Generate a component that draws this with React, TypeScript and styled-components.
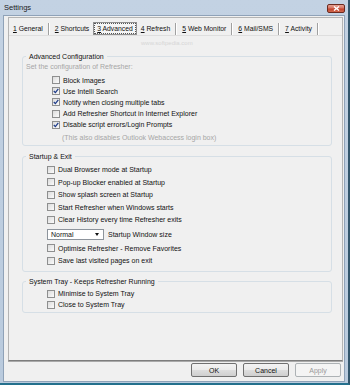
import React from 'react';
import styled, { createGlobalStyle } from 'styled-components';

const GlobalStyle = createGlobalStyle`
	html, body {
		margin: 0;
		padding: 0;
		background: #f0f0f0;
	}
	* {
		box-sizing: border-box;
	}
`;

interface Option {
	label: string;
	checked?: boolean;
}

const tabs = ['General', 'Shortcuts', 'Advanced', 'Refresh', 'Web Monitor', 'Mail/SMS', 'Activity'];
const activeTab = 2;

const advancedOptions: Option[] = [
	{ label: 'Block Images' },
	{ label: 'Use Intelli Search', checked: true },
	{ label: 'Notify when closing multiple tabs', checked: true },
	{ label: 'Add Refresher Shortcut in Internet Explorer' },
	{ label: 'Disable script errors/Login Prompts', checked: true },
];

const startupOptions: Option[] = [
	{ label: 'Dual Browser mode at Startup' },
	{ label: 'Pop-up Blocker enabled at Startup' },
	{ label: 'Show splash screen at Startup' },
	{ label: 'Start Refresher when Windows starts' },
	{ label: 'Clear History every time Refresher exits' },
];

const exitOptions: Option[] = [
	{ label: 'Optimise Refresher - Remove Favorites' },
	{ label: 'Save last visited pages on exit' },
];

const trayOptions: Option[] = [
	{ label: 'Minimise to System Tray' },
	{ label: 'Close to System Tray' },
];

const CheckBox: React.FC<{ checked?: boolean }> = ({ checked }) => (
	<Box>
		{checked && (
			<svg width="6" height="6" viewBox="0 0 6 6">
				<path d="M0.8 3 L2.4 4.6 L5.3 0.9" fill="none" stroke="#1f3d8a" strokeWidth="1.3" />
			</svg>
		)}
	</Box>
);

const OptionList: React.FC<{ items: Option[]; indent: number; rowHeight: number }> = ({ items, indent, rowHeight }) => (
	<>
		{items.map((item) => (
			<Row key={item.label} $indent={indent} $height={rowHeight}>
				<CheckBox checked={item.checked} />
				<span>{item.label}</span>
			</Row>
		))}
	</>
);

const App: React.FC = () => (
	<>
		<GlobalStyle />
		<Window>
			<TitleBar>
				<Title>Settings</Title>
				<CloseButton>
					<svg width="7" height="5" viewBox="0 0 7 5">
						<path d="M1 0.5 L6 4.5 M6 0.5 L1 4.5" stroke="#fff" strokeWidth="1.4" />
					</svg>
				</CloseButton>
			</TitleBar>
			<Client>
				<TabControl>
					<TabStrip>
						{tabs.map((name, idx) => (
							<React.Fragment key={name}>
								<Tab $active={idx === activeTab}>
									<TabLabel $active={idx === activeTab}>
										<u>{idx + 1}</u> {name}
									</TabLabel>
								</Tab>
								{idx !== activeTab && idx + 1 !== activeTab && <TabSeparator />}
							</React.Fragment>
						))}
					</TabStrip>
					<TabPage>
						<Watermark>www.softpedia.com</Watermark>
						<Group>
							<Legend>Advanced Configuration</Legend>
							<Hint>Set the configuration of Refresher:</Hint>
							<Spacer $h={2.5} />
							<OptionList items={advancedOptions} indent={26} rowHeight={11.2} />
							<Note>(This also disables Outlook Webaccess login box)</Note>
							<Spacer $h={2} />
						</Group>
						<Group $top={6}>
							<Legend>Startup &amp; Exit</Legend>
							<Spacer $h={2.6} />
							<OptionList items={startupOptions} indent={21} rowHeight={12.5} />
							<ComboRow>
								<Combo>
									<span>Normal</span>
									<ComboArrow />
								</Combo>
								<span>Startup Window size</span>
							</ComboRow>
							<OptionList items={exitOptions} indent={21} rowHeight={12.5} />
							<Spacer $h={4} />
						</Group>
						<Group $top={5}>
							<Legend>System Tray - Keeps Refresher Running</Legend>
							<Spacer $h={2} />
							<OptionList items={trayOptions} indent={21} rowHeight={11.3} />
							<Spacer $h={1} />
						</Group>
					</TabPage>
				</TabControl>
				<ButtonRow>
					<Button>OK</Button>
					<Button>Cancel</Button>
					<Button disabled>Apply</Button>
				</ButtonRow>
			</Client>
		</Window>
	</>
);

const Window = styled.div`
	width: 350px;
	height: 385px;
	display: flex;
	flex-direction: column;
	background: linear-gradient(#c3d2e3, #b9cadd);
	border-right: 2px solid #33566c;
	border-bottom: 2px solid #24708d;
	font-family: 'Liberation Sans', Arial, sans-serif;
	font-size: 7px;
	color: #000;
`;

const TitleBar = styled.div`
	height: 15px;
	display: flex;
	align-items: flex-start;
	padding-left: 4px;
`;

const Title = styled.div`
	font-size: 7.5px;
	line-height: 15px;
	color: #1b1b1b;
`;

const CloseButton = styled.div`
	margin: 4px 3px 0 auto;
	width: 18px;
	height: 9px;
	border: 1px solid #6b2a20;
	border-radius: 2px;
	background: linear-gradient(#e4a193 0%, #d77563 45%, #c2412b 55%, #d0694f 100%);
	display: flex;
	align-items: center;
	justify-content: center;
`;

const Client = styled.div`
	flex: 1;
	margin: 0 3px 1px 3px;
	border: 1px solid #8fa2b8;
	background: #f0f0f0;
	padding: 1px 1px 0 4px;
	display: flex;
	flex-direction: column;
`;

const TabControl = styled.div`
	flex: 1;
	display: flex;
	flex-direction: column;
	border: 1px solid #b4b4b4;
	border-bottom: 1px solid #7d7d7d;
	box-shadow: 0 1px 0 #a9a9a9;
	margin-bottom: 1px;
`;

const TabStrip = styled.div`
	height: 17px;
	padding: 4px 0 0 0;
	display: flex;
	align-items: flex-start;
	font-size: 6.8px;
`;

const Tab = styled.div<{ $active?: boolean }>`
	height: 13px;
	padding: 0 ${(p) => (p.$active ? '1px' : '2px')};
	display: flex;
	align-items: center;
	border: 1px solid ${(p) => (p.$active ? '#8f8f8f' : 'transparent')};
	background: ${(p) => (p.$active ? '#f5f5f5' : 'transparent')};
	white-space: nowrap;
`;

const TabLabel = styled.span<{ $active?: boolean }>`
	padding: 0 ${(p) => (p.$active ? '2px' : '1px')};
	line-height: 9px;
	outline: ${(p) => (p.$active ? '1px dotted #555' : 'none')};
	color: #111;
`;

const TabSeparator = styled.div`
	width: 2px;
	height: 12px;
	margin: 1px 1px 0;
	border-left: 1px solid #a0a0a0;
	border-right: 1px solid #fff;
`;

const TabPage = styled.div`
	flex: 1;
	position: relative;
	border-top: 1px solid #dedede;
	padding-top: 16px;
`;

const Watermark = styled.div`
	position: absolute;
	left: 132px;
	top: 4px;
	font-size: 6px;
	color: #d6d6d6;
`;

const Group = styled.fieldset<{ $top?: number }>`
	margin: ${(p) => p.$top ?? 0}px 10px 0 13px;
	padding: 0 3px;
	min-width: 0;
	border: 1px solid #d6dfe6;
	border-radius: 3px;
`;

const Legend = styled.legend`
	padding: 0 3px;
	line-height: 9px;
	color: #111;
`;

const Spacer = styled.div<{ $h: number }>`
	height: ${(p) => p.$h}px;
`;

const Hint = styled.div`
	line-height: 11px;
	color: #a6a6a6;
`;

const Note = styled.div`
	margin: 1.5px 0 0 36px;
	line-height: 11px;
	color: #a6a6a6;
`;

const Row = styled.div<{ $indent: number; $height: number }>`
	height: ${(p) => p.$height}px;
	margin-left: ${(p) => p.$indent}px;
	display: flex;
	align-items: center;
	gap: 3px;
	white-space: nowrap;
	color: #111;
`;

const Box = styled.div`
	width: 8px;
	height: 8px;
	flex: none;
	border: 1px solid #8e8f8f;
	background: linear-gradient(135deg, #dcdcdc, #fbfbfb);
	display: flex;
	align-items: center;
	justify-content: center;
`;

const ComboRow = styled.div`
	height: 16px;
	margin-left: 21px;
	display: flex;
	align-items: center;
	gap: 4px;
	color: #111;
`;

const Combo = styled.div`
	width: 57px;
	height: 11px;
	padding: 0 4px 0 3px;
	border: 1px solid #8d949c;
	background: #fff;
	display: flex;
	align-items: center;
	justify-content: space-between;
`;

const ComboArrow = styled.div`
	width: 0;
	height: 0;
	border-left: 2.5px solid transparent;
	border-right: 2.5px solid transparent;
	border-top: 3px solid #111;
`;

const ButtonRow = styled.div`
	height: 19px;
	padding: 1px 2px 4px 0;
	display: flex;
	justify-content: flex-end;
	gap: 6px;
`;

const Button = styled.button`
	width: 46px;
	height: 14px;
	padding: 0;
	border: 1px solid #707070;
	border-radius: 2px;
	background: linear-gradient(#f3f3f3 0%, #ebebeb 48%, #dddddd 52%, #cfcfcf 100%);
	font-family: 'Liberation Sans', Arial, sans-serif;
	font-size: 7px;
	color: #111;

	&:disabled {
		border-color: #adb2b5;
		background: #f4f4f4;
		color: #9a9a9a;
	}
`;

export default App;
